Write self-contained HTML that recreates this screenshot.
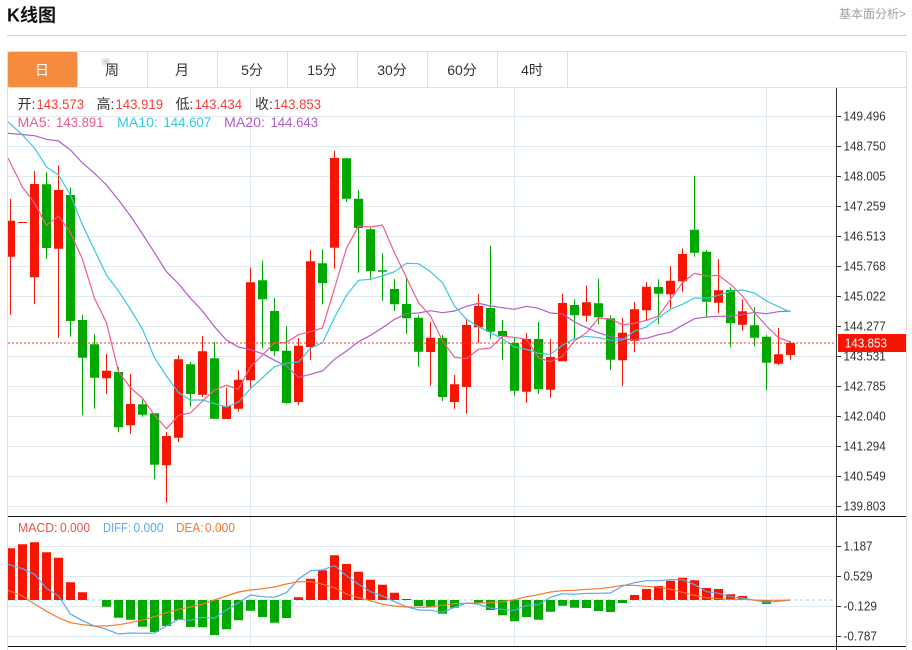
<!DOCTYPE html>
<html lang="zh-CN">
<head>
<meta charset="utf-8">
<title>K线图</title>
<style>
html,body{margin:0;padding:0;background:#fff;width:912px;height:650px;overflow:hidden}
svg{display:block;position:absolute;left:0;top:0}
text{font-family:"Liberation Sans","Noto Sans CJK SC",sans-serif}
.ax{font-size:13px;fill:#333}
.tab{font-size:14px;fill:#333;text-anchor:middle}
</style>
</head>
<body>
<svg width="912" height="650" viewBox="0 0 912 650" xmlns="http://www.w3.org/2000/svg">
<defs>
<radialGradient id="sm"><stop offset="0" stop-color="#bbb" stop-opacity=".8"/><stop offset="1" stop-color="#bbb" stop-opacity="0"/></radialGradient>
</defs>
<text x="7" y="21.5" font-size="18" font-weight="700" fill="#111">K线图</text>
<text x="839" y="18" font-size="12" fill="#a0a0a0">基本面分析&gt;</text>
<path d="M7 35.5H907" stroke="#cfcfcf" stroke-width="1" fill="none"/>

<!-- frame -->
<path d="M7.5 51V650M906.5 51V650M7 51.5H907M7 87.5H907M147.5 52V87M217.5 52V87M287.5 52V87M357.5 52V87M427.5 52V87M497.5 52V87M567.5 52V87" stroke="#dfdfdf" stroke-width="1" fill="none"/>
<rect x="8" y="52" width="69.5" height="35" rx="1.5" fill="#f58b3f"/>
<circle cx="106" cy="62" r="6" fill="url(#sm)"/>
<text x="42" y="75" class="tab" style="fill:#fff">日</text>
<text x="112" y="75" class="tab">周</text>
<text x="182" y="75" class="tab">月</text>
<text x="252" y="75" class="tab">5分</text>
<text x="322" y="75" class="tab">15分</text>
<text x="392" y="75" class="tab">30分</text>
<text x="462" y="75" class="tab">60分</text>
<text x="532" y="75" class="tab">4时</text>

<!-- grid -->
<path d="M8 116.5H836M8 146.5H836M8 176.5H836M8 206.5H836M8 236.5H836M8 266.5H836M8 296.5H836M8 326.5H836M8 356.5H836M8 386.5H836M8 416.5H836M8 446.5H836M8 476.5H836M8 506.5H836M8 546.5H836M8 576.5H836M8 606.5H836M8 636.5H836M250.5 88V646M514.5 88V646M766.5 88V646" stroke="#dfe9f2" stroke-width="1" fill="none"/>

<!-- info -->
<g font-size="14">
<text x="17.5" y="109" fill="#333">开:</text><text x="36.5" y="109" fill="#f5403a" textLength="47.5" lengthAdjust="spacingAndGlyphs">143.573</text>
<text x="96.5" y="109" fill="#333">高:</text><text x="115.5" y="109" fill="#f5403a" textLength="47.5" lengthAdjust="spacingAndGlyphs">143.919</text>
<text x="175.5" y="109" fill="#333">低:</text><text x="194.5" y="109" fill="#f5403a" textLength="47.5" lengthAdjust="spacingAndGlyphs">143.434</text>
<text x="255" y="109" fill="#333">收:</text><text x="273.5" y="109" fill="#f5403a" textLength="47.5" lengthAdjust="spacingAndGlyphs">143.853</text>
<text x="17.5" y="127" fill="#ef5b8e" textLength="33" lengthAdjust="spacingAndGlyphs">MA5:</text><text x="56" y="127" fill="#ef5b8e" textLength="47.5" lengthAdjust="spacingAndGlyphs">143.891</text>
<text x="117" y="127" fill="#36c8e0" textLength="41" lengthAdjust="spacingAndGlyphs">MA10:</text><text x="163.5" y="127" fill="#36c8e0" textLength="47.5" lengthAdjust="spacingAndGlyphs">144.607</text>
<text x="224" y="127" fill="#b35ccc" textLength="41" lengthAdjust="spacingAndGlyphs">MA20:</text><text x="270.5" y="127" fill="#b35ccc" textLength="47.5" lengthAdjust="spacingAndGlyphs">144.643</text>
</g>
<g font-size="13">
<text x="18" y="532" fill="#f2504a" textLength="39.5" lengthAdjust="spacingAndGlyphs">MACD:</text><text x="60" y="532" fill="#f2504a" textLength="30" lengthAdjust="spacingAndGlyphs">0.000</text>
<text x="103" y="532" fill="#5aa8f0" textLength="28" lengthAdjust="spacingAndGlyphs">DIFF:</text><text x="133.5" y="532" fill="#5aa8f0" textLength="30" lengthAdjust="spacingAndGlyphs">0.000</text>
<text x="176" y="532" fill="#f57a2a" textLength="27.5" lengthAdjust="spacingAndGlyphs">DEA:</text><text x="205" y="532" fill="#f57a2a" textLength="30" lengthAdjust="spacingAndGlyphs">0.000</text>
</g>

<!-- red wicks -->
<path stroke="#f51500" stroke-width="1" fill="none" d="M10.5 199V315M34.5 171V304.3M58.5 165.3V337.7M106.5 354V393.7M130.5 374.3V433.7M166.5 431.7V502.7M178.5 355.3V442M202.5 336V397M226.5 387.7V419M238.5 370V411.7M250.5 267.7V387.7M298.5 338V405.3M310.5 250V360M334.5 150.7V268.7M430.5 321.7V385.7M454.5 375V408.7M466.5 319.3V413.3M478.5 294.3V343M526.5 333V402.7M550.5 339V397.7M562.5 293.7V361.3M586.5 285.3V321.7M622.5 318V386M634.5 302V351.7M646.5 282V321M670.5 266.3V308.3M682.5 248.3V292.3M718.5 259V313M742.5 299.3V330.7M778.5 328V364.7M790.5 341V359.7"/>
<!-- red bodies -->
<path fill="#f51500" d="M8 220.7H15V256.7H8ZM18 222H27V223H18ZM30 184H39V277.3H30ZM54 190H63V248.7H54ZM102 370.7H111V378.3H102ZM126 404H135V425.3H126ZM162 436H171V465.3H162ZM174 359.3H183V437.7H174ZM198 351.3H207V394.7H198ZM222 406H231V419H222ZM234 379.7H243V408.7H234ZM246 282.3H255V380.3H246ZM294 345.7H303V402H294ZM306 261.3H315V347H306ZM330 158H339V247.7H330ZM426 337.7H435V352H426ZM450 384.3H459V402H450ZM462 325H471V387H462ZM474 306H483V327.3H474ZM522 339H531V391.7H522ZM546 357H555V389.7H546ZM558 303H567V361.3H558ZM582 302.3H591V315.7H582ZM618 332.7H627V360.3H618ZM630 309.3H639V340.7H630ZM642 286.7H651V310.3H642ZM666 280.7H675V294.3H666ZM678 254H687V281.3H678ZM714 290.3H723V302.7H714ZM738 311.3H747V324.7H738ZM774 354.3H783V363.7H774ZM786 343H795V355H786Z"/>
<!-- green wicks -->
<path stroke="#00a800" stroke-width="1" fill="none" d="M46.5 172.3V258.7M70.5 187.3V336.7M82.5 314.7V415.3M94.5 334.3V408.7M118.5 367V432.3M142.5 399.3V416.7M154.5 413.3V479.3M190.5 362V406.7M214.5 342V418.7M262.5 260.7V348.3M274.5 297.7V356M286.5 326.3V403.7M322.5 249.3V304.3M346.5 158.3V201.7M358.5 190V272.7M370.5 227.7V280.3M382.5 253.3V300.7M394.5 279V311M406.5 277V333.7M418.5 315V366.7M442.5 335V401M490.5 245.7V339M502.5 320V360M514.5 337.7V396M538.5 322V393.7M574.5 299.3V339.3M598.5 278.7V324.3M610.5 315.3V370M658.5 279.3V324.3M694.5 175.7V256.7M706.5 250V317M730.5 287.3V347.3M754.5 307V346.3M766.5 335V390.3"/>
<!-- green bodies -->
<path fill="#00a800" d="M42 184.3H51V248H42ZM66 195H75V321H66ZM78 320H87V357.7H78ZM90 344.3H99V377.7H90ZM114 372H123V427.3H114ZM138 404.3H147V414.7H138ZM150 413.3H159V464.7H150ZM186 364.3H195V394H186ZM210 358.3H219V418.7H210ZM258 280.3H267V299.3H258ZM270 311H279V351H270ZM282 350.7H291V403H282ZM318 263.3H327V283H318ZM342 158.3H351V198.7H342ZM354 198.7H363V228H354ZM366 229.3H375V271H366ZM378 270.3H387V271.7H378ZM390 289H399V304.3H390ZM402 304H411V318.3H402ZM414 317.7H423V351.7H414ZM438 338H447V397H438ZM486 308H495V331.7H486ZM498 331H507V336H498ZM510 343H519V390.7H510ZM534 339H543V389.3H534ZM570 305H579V315.3H570ZM594 303.3H603V317.3H594ZM606 318.3H615V359.7H606ZM654 287H663V293.7H654ZM690 229.7H699V252.7H690ZM702 251.7H711V301.7H702ZM726 290H735V323.3H726ZM750 325.3H759V337.7H750ZM762 336.7H771V362.7H762Z"/>

<!-- MA20 -->
<polyline fill="none" stroke="#b35ccc" stroke-width="1.2" points="8,133.3 22.5,134.5 34.5,135.7 46.5,139.3 58.5,141 70.5,150 82.5,163 94.5,173.3 106.5,185 118.5,200 130.5,216 142.5,234 154.5,252.7 166.5,271.7 178.5,283.7 190.5,298.3 202.5,311 214.5,326.7 226.5,340.3 238.5,347 250.5,349.7 262.5,353.7 274.5,360.3 286.5,366 298.5,377.3 310.5,374.3 322.5,371 334.5,359.3 346.5,351 358.5,341.7 370.5,335.3 382.5,327.7 394.5,319.3 406.5,313.7 418.5,313 430.5,310.7 442.5,312.7 454.5,311 466.5,306.3 478.5,303.3 490.5,306 502.5,307.7 514.5,309.3 526.5,306.3 538.5,308.3 550.5,313 562.5,314 574.5,322 586.5,327.7 598.5,332.7 610.5,336.7 622.5,339 634.5,339.7 646.5,338.3 658.5,334.7 670.5,332.3 682.5,325.3 694.5,318.7 706.5,317 718.5,316.3 730.5,316 742.5,314.7 754.5,312.3 766.5,313.7 778.5,311.7 790.5,311"/>
<!-- MA10 -->
<polyline fill="none" stroke="#36c8e0" stroke-width="1.2" points="8,121.7 22.5,135 34.5,148 46.5,167 58.5,175 70.5,195 82.5,225 94.5,250 106.5,275.3 118.5,291 130.5,309.3 142.5,329.3 154.5,357.7 166.5,376 178.5,392.7 190.5,400 202.5,400 214.5,403.7 226.5,407 238.5,402 250.5,388.7 262.5,377.7 274.5,366.7 286.5,363.3 298.5,362 310.5,348.3 322.5,342.7 334.5,317.7 346.5,295.3 358.5,280.3 370.5,279.3 382.5,276 394.5,271.7 406.5,263.3 418.5,263.7 430.5,271.7 442.5,282.7 454.5,306 466.5,319.3 478.5,326.7 490.5,332.7 502.5,338.7 514.5,347 526.5,349.3 538.5,353.3 550.5,354.3 562.5,345.3 574.5,338.7 586.5,336.3 598.5,337.7 610.5,340.3 622.5,340 634.5,331 646.5,327 658.5,317.7 670.5,309.3 682.5,304.3 694.5,298 706.5,298.3 718.5,295.3 730.5,291.3 742.5,290 754.5,293 766.5,301 778.5,306.7 790.5,312"/>
<!-- MA5 -->
<polyline fill="none" stroke="#ef5b8e" stroke-width="1.2" points="8,158 10.5,163 22.5,187.3 34.5,203 46.5,225.3 58.5,216 70.5,232.7 82.5,259.3 94.5,298.3 106.5,322.7 118.5,371.7 130.5,387.7 142.5,398.3 154.5,415.3 166.5,428.7 178.5,415.3 190.5,413 202.5,401 214.5,390 226.5,385.3 238.5,389.3 250.5,366.7 262.5,355 274.5,343 286.5,342.3 298.5,334.7 310.5,331.7 322.5,328 334.5,288.3 346.5,248.3 358.5,226 370.5,227 382.5,225 394.5,252.7 406.5,277.7 418.5,302.7 430.5,316 442.5,341 454.5,357.3 466.5,358.7 478.5,349.3 490.5,348 502.5,336.3 514.5,337.3 526.5,339.3 538.5,357.7 550.5,361.7 562.5,356.3 574.5,340.7 586.5,332.7 598.5,318.3 610.5,319 622.5,324.7 634.5,323.3 646.5,320.3 658.5,316 670.5,299.3 682.5,282.7 694.5,273.3 706.5,276 718.5,275.3 730.5,284.3 742.5,296 754.5,312.7 766.5,326 778.5,337.7 790.5,342"/>

<!-- last price -->
<path d="M8 343H836" stroke="#f5352a" stroke-width="1" stroke-dasharray="2 2" fill="none"/>

<!-- MACD -->
<path d="M8 600H833" stroke="#8fd8ec" stroke-width="1" stroke-dasharray="3 3" fill="none"/>
<path fill="#f51500" d="M8 548.3H15V600H8ZM18 544.3H27V600H18ZM30 542.3H39V600H30ZM42 552.3H51V600H42ZM54 557.7H63V600H54ZM66 582.3H75V600H66ZM78 592.3H87V600H78ZM294 597.3H303V600H294ZM306 578.7H315V600H306ZM318 570.3H327V600H318ZM330 555.3H339V600H330ZM342 564H351V600H342ZM354 571.7H363V600H354ZM366 579.7H375V600H366ZM378 584.7H387V600H378ZM390 592.7H399V600H390ZM402 599H411V600H402ZM630 595H639V600H630ZM642 589H651V600H642ZM654 586H663V600H654ZM666 580.7H675V600H666ZM678 577.7H687V600H678ZM690 580.3H699V600H690ZM702 588H711V600H702ZM714 589H723V600H714ZM726 594.3H735V600H726ZM738 596H747V600H738Z"/>
<path fill="#00a800" d="M102 600H111V606.7H102ZM114 600H123V617.7H114ZM126 600H135V619.7H126ZM138 600H147V626.7H138ZM150 600H159V632H150ZM162 600H171V626H162ZM174 600H183V620H174ZM186 600H195V627H186ZM198 600H207V627.3H198ZM210 600H219V635H210ZM222 600H231V629.3H222ZM234 600H243V620.3H234ZM246 600H255V610.7H246ZM258 600H267V617H258ZM270 600H279V622.7H270ZM282 600H291V618H282ZM414 600H423V606H414ZM426 600H435V607.3H426ZM438 600H447V613.7H438ZM450 600H459V607.7H450ZM474 600H483V602.7H474ZM486 600H495V610H486ZM498 600H507V615.3H498ZM510 600H519V621.3H510ZM522 600H531V617H522ZM534 600H543V619.7H534ZM546 600H555V611.7H546ZM558 600H567V605.7H558ZM570 600H579V607.7H570ZM582 600H591V608H582ZM594 600H603V611H594ZM606 600H615V612H606ZM618 600H627V603H618ZM762 600H771V604H762Z"/>
<polyline fill="none" stroke="#5aa8f0" stroke-width="1.2" points="8,564.3 22.5,568.7 34.5,574.3 46.5,588.3 58.5,596 70.5,614 82.5,620.7 94.5,626 106.5,629.3 118.5,634 130.5,633 142.5,633.3 154.5,633 166.5,626 178.5,619.3 190.5,620.3 202.5,617.3 214.5,618 226.5,610 238.5,602.7 250.5,595 262.5,596.7 274.5,597.3 286.5,592.7 298.5,579 310.5,570.7 322.5,570 334.5,565.7 346.5,575.7 358.5,584.3 370.5,591.7 382.5,596 394.5,601.7 406.5,606.7 418.5,610 430.5,610.3 442.5,612.3 454.5,607.3 466.5,603 478.5,604.3 490.5,608 502.5,609.3 514.5,610.3 526.5,605.3 538.5,604.7 550.5,597.3 562.5,593.7 574.5,594.3 586.5,593.3 598.5,593.3 610.5,593 622.5,586 634.5,582.7 646.5,580.7 658.5,580.7 670.5,579.7 682.5,579.7 694.5,584.7 706.5,591.7 718.5,593.3 730.5,596.7 742.5,598 754.5,600.3 766.5,602.3 778.5,601.3 790.5,600"/>
<polyline fill="none" stroke="#f57a2a" stroke-width="1.2" points="8,590.3 22.5,596 34.5,604 46.5,611.3 58.5,617.7 70.5,622.7 82.5,624.7 94.5,626 106.5,626 118.5,624.7 130.5,622.7 142.5,620 154.5,616.7 166.5,612.7 178.5,609.3 190.5,607 202.5,604.3 214.5,600 226.5,596 238.5,592 250.5,590 262.5,588.7 274.5,587 286.5,584 298.5,581.7 310.5,581.7 322.5,584.3 334.5,587.7 346.5,594 358.5,597.7 370.5,600.7 382.5,604.3 394.5,606 406.5,607 418.5,607.3 430.5,607 442.5,605.3 454.5,603.7 466.5,603.3 478.5,603 490.5,602.7 502.5,601.7 514.5,599.7 526.5,596.7 538.5,594.7 550.5,592 562.5,590.7 574.5,590.3 586.5,589.3 598.5,588.7 610.5,587.3 622.5,585.3 634.5,585.3 646.5,586.3 658.5,587.3 670.5,589.3 682.5,592.3 694.5,595.3 706.5,597.7 718.5,598.7 730.5,599.3 742.5,599.3 754.5,600 766.5,600.3 778.5,600.3 790.5,600"/>

<!-- black separators -->
<path d="M8 516.5H906M8 646.5H906" stroke="#111" stroke-width="1" fill="none"/>

<!-- y axis -->
<path d="M836.5 88V650M837 116.5H841M837 146.5H841M837 176.5H841M837 206.5H841M837 236.5H841M837 266.5H841M837 296.5H841M837 326.5H841M837 356.5H841M837 386.5H841M837 416.5H841M837 446.5H841M837 476.5H841M837 506.5H841M837 546.5H841M837 576.5H841M837 606.5H841M837 636.5H841" stroke="#333" stroke-width="1" fill="none"/>
<text class="ax" x="843.5" y="120.7" textLength="42.3" lengthAdjust="spacingAndGlyphs">149.496</text>
<text class="ax" x="843.5" y="150.7" textLength="42.3" lengthAdjust="spacingAndGlyphs">148.750</text>
<text class="ax" x="843.5" y="180.7" textLength="42.3" lengthAdjust="spacingAndGlyphs">148.005</text>
<text class="ax" x="843.5" y="210.7" textLength="42.3" lengthAdjust="spacingAndGlyphs">147.259</text>
<text class="ax" x="843.5" y="240.7" textLength="42.3" lengthAdjust="spacingAndGlyphs">146.513</text>
<text class="ax" x="843.5" y="270.7" textLength="42.3" lengthAdjust="spacingAndGlyphs">145.768</text>
<text class="ax" x="843.5" y="300.7" textLength="42.3" lengthAdjust="spacingAndGlyphs">145.022</text>
<text class="ax" x="843.5" y="330.7" textLength="42.3" lengthAdjust="spacingAndGlyphs">144.277</text>
<text class="ax" x="843.5" y="360.7" textLength="42.3" lengthAdjust="spacingAndGlyphs">143.531</text>
<text class="ax" x="843.5" y="390.7" textLength="42.3" lengthAdjust="spacingAndGlyphs">142.785</text>
<text class="ax" x="843.5" y="420.7" textLength="42.3" lengthAdjust="spacingAndGlyphs">142.040</text>
<text class="ax" x="843.5" y="450.7" textLength="42.3" lengthAdjust="spacingAndGlyphs">141.294</text>
<text class="ax" x="843.5" y="480.7" textLength="42.3" lengthAdjust="spacingAndGlyphs">140.549</text>
<text class="ax" x="843.5" y="510.7" textLength="42.3" lengthAdjust="spacingAndGlyphs">139.803</text>
<text class="ax" x="843.5" y="550.7" textLength="29" lengthAdjust="spacingAndGlyphs">1.187</text>
<text class="ax" x="843.5" y="580.7" textLength="29" lengthAdjust="spacingAndGlyphs">0.529</text>
<text class="ax" x="843.5" y="610.7" textLength="33.5" lengthAdjust="spacingAndGlyphs">-0.129</text>
<text class="ax" x="843.5" y="640.7" textLength="33.5" lengthAdjust="spacingAndGlyphs">-0.787</text>
<rect x="838" y="334" width="68" height="18" fill="#f51500"/>
<text x="844.7" y="347.5" font-size="13" fill="#fff" textLength="42.3" lengthAdjust="spacingAndGlyphs">143.853</text>
</svg>
</body>
</html>
